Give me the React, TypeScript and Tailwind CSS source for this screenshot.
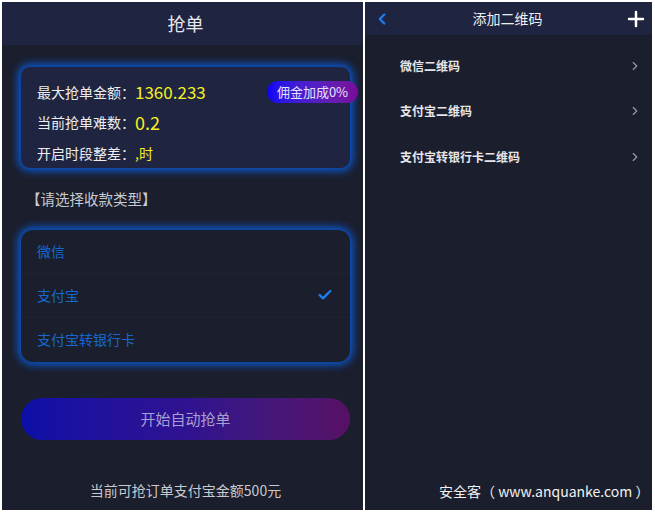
import { Check, ChevronLeft, ChevronRight, Plus } from "lucide-react";

const font = { fontFamily: '"Noto Sans CJK SC", "Noto Sans", sans-serif' };

const payTypes = [
  { name: "微信", checked: false },
  { name: "支付宝", checked: true },
  { name: "支付宝转银行卡", checked: false },
];

const qrTypes = ["微信二维码", "支付宝二维码", "支付宝转银行卡二维码"];

function GrabPanel() {
  return (
    <div className="flex h-full w-[361px] flex-col bg-[#1b1e2c]">
      <div className="flex h-[43px] items-center justify-center bg-[#1f2440] pl-[6px] text-[18px] text-[#e8e8ee]">
        抢单
      </div>

      <div className="pl-[19px] pr-[13px] pt-[22px]">
        <div className="relative rounded-[9px] bg-[#1f2440] px-[16px] pt-[10px] shadow-[0_0_9px_3px_#0a5ad6]">
          <div className="flex h-[30px] items-center text-[14px] text-[#eeeeee]">
            最大抢单金额：
            <span className="text-[17px] text-[#f5f023]">1360.233</span>
          </div>
          <div className="flex h-[31px] items-center text-[14px] text-[#eeeeee]">
            当前抢单难数：
            <span className="text-[18px] text-[#f5f023]">0.2</span>
          </div>
          <div className="flex h-[30px] items-center text-[14px] text-[#eeeeee]">
            开启时段整差：
            <span className="text-[14px] text-[#f5f023]">,时</span>
          </div>
          <div className="absolute right-[-8px] top-[14px] flex h-[22px] w-[91px] items-center justify-center rounded-full bg-gradient-to-r from-[#0a00f5] to-[#7a0898] text-[13px] text-[#e6e0ff]">
            佣金加成0%
          </div>
        </div>
      </div>

      <div className="mt-[20px] pl-[24px] text-[14.5px] text-[#c9c9cf]">【请选择收款类型】</div>

      <div className="pl-[19px] pr-[13px] pt-[20px]">
        <div className="overflow-hidden rounded-[12px] bg-[#1b1e2c] shadow-[0_0_9px_3px_#0a5ad6]">
          {payTypes.map((t, i) => (
            <div
              key={t.name}
              className={`flex h-[44px] items-center justify-between pl-[16px] pr-[17px] text-[14px] text-[#1668d0] ${
                i < payTypes.length - 1 ? "border-b border-[#22232c]" : ""
              }`}
            >
              <span>{t.name}</span>
              {t.checked && <Check className="h-[16px] w-[16px] text-[#1a7ff0]" strokeWidth={3.5} />}
            </div>
          ))}
        </div>
      </div>

      <div className="pl-[19px] pr-[13px] pt-[36px]">
        <div className="flex h-[42px] items-center justify-center rounded-full bg-gradient-to-r from-[#0c0fa8] via-[#2f1290] to-[#571065] text-[15px] text-[#a99fd2]">
          开始自动抢单
        </div>
      </div>

      <div className="mt-auto pb-[9px] pl-[6px] text-center text-[14px] text-[#c9c9cf]">当前可抢订单支付宝金额500元</div>
    </div>
  );
}

function QrPanel() {
  return (
    <div className="relative flex h-full w-[287px] flex-col bg-[#1b1e2c]">
      <div className="flex h-[33px] items-center justify-between bg-[#1f2440] pl-[8px] pr-[4px]">
        <ChevronLeft className="h-[18px] w-[18px] text-[#1a7ff0]" strokeWidth={3} />
        <span className="text-[14px] text-[#eeeeee]">添加二维码</span>
        <Plus className="h-[24px] w-[24px] text-white" strokeWidth={2.5} />
      </div>
      <div className="pt-[8px]">
        {qrTypes.map((q) => (
          <div key={q} className="flex h-[45.5px] items-center justify-between pl-[35px] pr-[10px]">
            <span className="text-[12px] font-bold text-[#e6e6ea]">{q}</span>
            <ChevronRight className="h-[14px] w-[14px] text-[#9a9aa6]" strokeWidth={2} />
          </div>
        ))}
      </div>
      <div className="mt-auto pb-[8px] pl-[74px] text-[14px] text-[#f2f2f2]">安全客（ www.anquanke.com ）</div>
    </div>
  );
}

export default function App() {
  return (
    <div style={font} className="flex h-[512px] w-[655px] gap-[2px] bg-white pb-[2px] pl-[2px] pt-[2px]">
      <GrabPanel />
      <QrPanel />
    </div>
  );
}
